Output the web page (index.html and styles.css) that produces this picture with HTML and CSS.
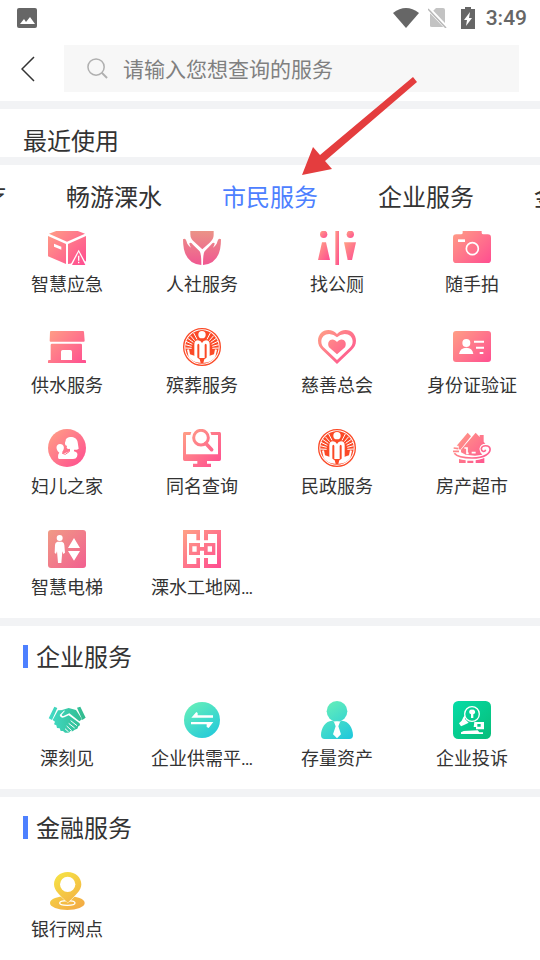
FILE: index.html
```html
<!DOCTYPE html>
<html lang="zh-CN">
<head>
<meta charset="utf-8">
<meta name="viewport" content="width=device-width, initial-scale=1">
<title>市民服务</title>
<link rel="stylesheet" href="styles.css">
</head>
<body>
<svg class="defs" aria-hidden="true">
  <defs>
    <linearGradient id="pink" x1="0" y1="0" x2="1" y2="1"><stop offset="0" stop-color="#ffa285"/><stop offset="1" stop-color="#ff4b91"/></linearGradient>
    <linearGradient id="pinkAll" gradientUnits="userSpaceOnUse" x1="0" y1="0" x2="114" y2="114"><stop offset="0" stop-color="#ffa285"/><stop offset="1" stop-color="#ff4b91"/></linearGradient>
    <linearGradient id="pinkSoft" gradientUnits="userSpaceOnUse" x1="0" y1="0" x2="114" y2="114"><stop offset="0" stop-color="#f09b85"/><stop offset="1" stop-color="#f25f90"/></linearGradient>
    <linearGradient id="pinkDown" gradientUnits="userSpaceOnUse" x1="0" y1="0" x2="0" y2="114"><stop offset="0" stop-color="#ea9a86"/><stop offset="1" stop-color="#f05791"/></linearGradient>
    <linearGradient id="teal" x1="0" y1="0" x2="1" y2="1"><stop offset="0" stop-color="#68ecbb"/><stop offset="1" stop-color="#20cbe0"/></linearGradient>
    <linearGradient id="tealAll" gradientUnits="userSpaceOnUse" x1="20" y1="0" x2="95" y2="114"><stop offset="0" stop-color="#68f0b8"/><stop offset="1" stop-color="#20c8dc"/></linearGradient>
    <linearGradient id="shake" gradientUnits="userSpaceOnUse" x1="0" y1="50" x2="114" y2="50"><stop offset="0" stop-color="#42dcc8"/><stop offset="1" stop-color="#31b98b"/></linearGradient>
    <linearGradient id="green" x1="0" y1="0" x2="1" y2="1"><stop offset="0" stop-color="#05dca6"/><stop offset="1" stop-color="#08bd79"/></linearGradient>
    <linearGradient id="gold" gradientUnits="userSpaceOnUse" x1="20" y1="0" x2="100" y2="114"><stop offset="0" stop-color="#f6e545"/><stop offset="1" stop-color="#f3a844"/></linearGradient>
    <symbol id="emblem" viewBox="0 0 114 114">
      <circle cx="57" cy="57" r="55" fill="#fff" stroke="#fb4a27" stroke-width="4"/>
      <circle cx="57" cy="57" r="50" fill="#fb4a27"/>
      <path d="M42 34 32 15M35 38 22 23M31 43 14 31M28 49 9 40M26 55 7 50M26 61 7 60M72 34 82 15M79 38 92 23M83 43 100 31M86 49 105 40M88 55 107 50M88 61 107 60" stroke="#fff" stroke-width="3"/>
      <circle cx="57" cy="21" r="14" fill="#fb4a27"/>
      <circle cx="57" cy="20" r="11" fill="#fff"/>
      <path d="M34 90V49Q34 37 45 37Q53 37 57 45Q61 37 69 37Q80 37 80 49V90H71V52Q71 47 68 47Q65 47 65 52V90H49V52Q49 47 46 47Q43 47 43 52V90Z" fill="#fff"/>
      <path d="M12 65 18 64 21 79 34 83 50 94 53 104Q30 105 17 87ZM102 65 96 64 93 79 80 83 64 94 61 104Q84 105 97 87Z" fill="#fff"/>
    </symbol>
  </defs>
</svg>

<div class="status">
  <svg class="status-photo" viewBox="0 0 20 20" aria-hidden="true"><rect width="20" height="20" rx="2" fill="#666"/><path d="M3 16 7 11 9 14 13 9 18 16Z" fill="#fff"/></svg>
  <svg class="status-wifi" viewBox="0 0 26 20" aria-hidden="true"><path d="M0 5Q13-5 26 5L13 20Z" fill="#666"/></svg>
  <svg class="status-sim" viewBox="0 0 20 20" aria-hidden="true"><path d="M8 0H15Q17 0 17 2V18Q17 19 15 19H4Q2 19 2 18V6Z" fill="#c3c3c3"/><path d="M0 0 19 20" stroke="#fff" stroke-width="4"/><path d="M0 1 18 20" stroke="#b7b7b7" stroke-width="1.5"/></svg>
  <svg class="status-battery" viewBox="0 0 14 22" aria-hidden="true"><path d="M4 0H10V2H14V22H0V2H4Z" fill="#666"/><path d="M9 5 3 13H6L5 19 11 11H8Z" fill="#fff"/></svg>
  <time class="status-time">3:49</time>
</div>

<header class="header">
  <button class="back" type="button" aria-label="返回"><svg viewBox="0 0 14 26" aria-hidden="true"><path d="M13 1 1 13 13 25" fill="none" stroke="#333" stroke-width="1.5"/></svg></button>
  <label class="search">
    <svg viewBox="0 0 22 22" aria-hidden="true"><circle cx="9.500" cy="9.500" r="8.500" fill="none" stroke="#b0b0b0" stroke-width="1.6"/><path d="M15.500 15.500 21 21" stroke="#b0b0b0" stroke-width="2"/></svg>
    <input type="search" placeholder="请输入您想查询的服务" aria-label="搜索服务">
  </label>
</header>

<section class="recent"><h2>最近使用</h2></section>

<nav class="tabs">
  <a href="#health">健康医疗</a>
  <a href="#travel">畅游溧水</a>
  <a href="#citizen" class="active" aria-current="true">市民服务</a>
  <a href="#company">企业服务</a>
  <a href="#finance">金融服务</a>
</nav>

<main>
  <section class="group scrolled" id="citizen">
    <div class="grid">
      <a class="item" href="#"><svg viewBox="0 0 114 114" aria-hidden="true"><g fill="url(#pinkAll)"><path d="M57 0 111 20 57 44 3 20Z"/><path d="M0 27 54 51V111L0 88Z"/><path d="M60 51 114 27V103L60 111Z"/></g><path d="M18 50 40 59V68L18 59Z" fill="#fff"/><path d="M92 68 66 116H118Z" fill="#fff"/><path d="M92 75 72 114H112Z" fill="url(#pinkAll)"/><path d="M92 86V101M92 104V109" stroke="#fff" stroke-width="4"/></svg><span>智慧应急</span></a>
      <a class="item" href="#"><svg viewBox="0 0 114 114" aria-hidden="true"><g fill="url(#pinkDown)"><path d="M22 0H92V24Q92 36 80 47L58 67 35 46Q22 36 22 22Z"/><path d="M0 37Q7 32 10 41L13 50Q18 58 24 62 17 51 20 48 25 46 30 53L50 73Q55 79 55 114 0 110 0 37Z"/><path d="M114 37Q107 32 104 41L101 50Q96 58 90 62 97 51 94 48 89 46 84 53L65 73Q60 79 60 114 114 110 114 37Z"/></g></svg><span>人社服务</span></a>
      <a class="item" href="#"><svg viewBox="0 0 114 114" aria-hidden="true"><g fill="url(#pink)"><circle cx="17" cy="22" r="11"/><circle cx="97" cy="22" r="11"/><path d="M12 46H24L36 99H0Z"/><path d="M52 0H63V114H52Z"/><path d="M78 46H114L102 99H89Z"/></g></svg><span>找公厕</span></a>
      <a class="item" href="#"><svg viewBox="0 0 114 114" aria-hidden="true"><path d="M10 22H24Q29 22 29 17V12H86V17Q86 22 91 22H104Q114 22 114 32V98Q114 108 104 108H10Q0 108 0 98V32Q0 22 10 22Z" fill="url(#pinkAll)"/><circle cx="58" cy="65" r="18" fill="none" stroke="#fff" stroke-width="5"/><path d="M15 37H36V45H15Z" fill="#fff"/></svg><span>随手拍</span></a>

      <a class="item" href="#"><svg viewBox="0 0 114 114" aria-hidden="true"><path d="M9 9H105Q108 9 108 12L110 38Q110 41 107 41H8Q5 41 5 38L6 12Q6 9 9 9ZM12 47H98Q102 47 102 51V96H111Q114 96 114 99V105H0V99Q0 96 3 96H8V51Q8 47 12 47ZM44 66Q39 66 39 71V96H72V71Q72 66 67 66Z" fill="url(#pinkAll)" fill-rule="evenodd"/></svg><span>供水服务</span></a>
      <a class="item" href="#"><svg viewBox="0 0 114 114" aria-hidden="true"><use href="#emblem"/></svg><span>殡葬服务</span></a>
      <a class="item" href="#"><svg viewBox="0 0 114 114" aria-hidden="true"><path d="M57 18Q46 6 31 6C13 6 0 20 0 38C0 50 5 58 13 66L57 108 101 66C109 58 114 50 114 38C114 20 101 6 83 6Q68 6 57 18ZM57 28Q66 19 80 18C94 18 104 27 104 41C104 50 99 56 94 61L57 96 20 61C14 56 10 50 10 41C10 27 20 18 34 18Q48 19 57 28ZM57 42C46 26 23 36 33 58L57 79 81 58C91 36 68 26 57 42Z" fill="url(#pinkAll)" fill-rule="evenodd"/></svg><span>慈善总会</span></a>
      <a class="item" href="#"><svg viewBox="0 0 114 114" aria-hidden="true"><rect y="9" width="114" height="93" rx="9" fill="url(#pinkAll)"/><g fill="#fff"><circle cx="40" cy="45" r="12"/><path d="M18 78Q22 59 40 59T61 78ZM63 38H93V44H63ZM69 56H93V62H69ZM80 72H91V78H80Z"/></g></svg><span>身份证验证</span></a>

      <a class="item" href="#"><svg viewBox="0 0 114 114" aria-hidden="true"><circle cx="57" cy="57" r="57" fill="url(#pinkAll)"/><g fill="#fff"><path d="M53 35C53 20 87 19 89 40L92 59Q85 64 78 62V67Q92 70 87 83 84 90 75 90H34Q28 90 31 76L34 71C22 62 23 45 36 45 49 45 51 60 43 68V74Q53 72 66 66V59Q59 62 56 56L57 50Q52 51 51 45 50 41 53 35Z"/></g><path d="M43 73 52 76 65 67" fill="none" stroke="#ff7088" stroke-width="3"/></svg><span>妇儿之家</span></a>
      <a class="item" href="#"><svg viewBox="0 0 114 114" aria-hidden="true"><path d="M4 9H25L22 18H9V76H105V18H85L82 9H110Q114 9 114 14V91Q114 96 109 96H72V104H84V114H30V104H43V96H5Q0 96 0 91V14Q0 9 4 9Z" fill="url(#pinkAll)"/><g fill="none" stroke="url(#pinkAll)"><circle cx="54" cy="26" r="22" stroke-width="9"/><path d="M68 43 86 62" stroke-width="11" stroke-linecap="round"/></g></svg><span>同名查询</span></a>
      <a class="item" href="#"><svg viewBox="0 0 114 114" aria-hidden="true"><use href="#emblem"/></svg><span>民政服务</span></a>
      <a class="item" href="#"><svg viewBox="0 0 114 114" aria-hidden="true"><g fill="url(#pinkAll)"><path d="M44 11 54 22 22 62 17 60V50H11Z"/><path d="M68 11 80 24V18H92V38L103 52H96L84 56 82 70 88 77 66 80 38 77 24 70V62Z"/><path d="M18 90Q27 93 38 94V102H18ZM43 95H61V102H43ZM68 94Q84 91 94 86V102H68Z"/></g><path d="M34 57H42V73H47M56 71H68" fill="none" stroke="#fff" stroke-width="5"/><path d="M2 57 16 59M0 67 18 67M4 73Q15 88 57 88C96 88 113 72 112 59 111 45 86 46 84 59 84 68 95 71 98 62" fill="none" stroke="#fff" stroke-width="9"/><path d="M2 57 16 59M0 67 18 67M4 73Q15 87 57 87C96 87 113 72 111 59 109 47 87 48 85 59 85 68 95 71 98 62" fill="none" stroke="url(#pinkAll)" stroke-width="5"/></svg><span>房产超市</span></a>

      <a class="item" href="#"><svg viewBox="0 0 114 114" aria-hidden="true"><rect width="114" height="114" rx="9" fill="url(#pinkSoft)"/><g fill="#fff"><circle cx="35" cy="24" r="9"/><path d="M28 35H42Q49 37 49 45L51 68 46 72 43 64 40 99H30L27 64 24 72 20 68 21 45Q21 37 28 35ZM78 24 96 54H60ZM60 63H96L78 92Z"/></g></svg><span>智慧电梯</span></a>
      <a class="item" href="#"><svg viewBox="0 0 114 114" aria-hidden="true"><path d="M0 0H51V31H40V12H12V102H40V84H51V114H0ZM63 0H114V114H63V84H75V102H102V12H75V31H63ZM18 39H51V51H63V39H97V75H63V62H51V75H18ZM28 49V65H41V49ZM74 49V65H87V49Z" fill="url(#pinkAll)" fill-rule="evenodd"/></svg><span>溧水工地网…</span></a>
    </div>
  </section>

  <section class="group" id="company">
    <h2>企业服务</h2>
    <div class="grid">
      <a class="item" href="#"><svg viewBox="0 0 114 114" aria-hidden="true"><g fill="url(#shake)"><path d="M19 17 28 21 12 57 2 52ZM87 20 97 17 113 50 103 57Z"/><path d="M30 28 50 27 35 42Q38 54 49 49L62 43 94 66Q99 73 91 76L88 83 80 86 74 91 67 90 63 95 51 95 45 90 38 90 35 82 27 81 25 73 18 70 21 62 14 57Z"/><path d="M42 27 62 21 84 27 102 55 94 61 64 37 48 44Q42 47 41 41L51 29Z"/></g><path d="M62 67 80 81M56 75 71 89M51 83 62 93M68 59 87 74" stroke="#fff" stroke-width="3"/></svg><span>溧刻见</span></a>
      <a class="item" href="#"><svg viewBox="0 0 114 114" aria-hidden="true"><circle cx="57" cy="57" r="54" fill="url(#tealAll)"/><path d="M25 50 40 33 44 36V43H90V50ZM24 63H91L77 81 71 78V70H24Z" fill="#fff"/></svg><span>企业供需平…</span></a>
      <a class="item" href="#"><svg viewBox="0 0 114 114" aria-hidden="true"><g fill="url(#tealAll)"><circle cx="57" cy="31" r="31"/><path d="M9 103C9 80 23 60 42 59Q57 66 72 59C91 60 105 80 105 103Q105 114 94 114H20Q9 114 9 103Z"/></g><path d="M48 63Q57 59 66 63L61 76 69 100 57 112 45 100 53 76Z" fill="#fff"/></svg><span>存量资产</span></a>
      <a class="item" href="#"><svg viewBox="0 0 114 114" aria-hidden="true"><rect width="114" height="114" rx="16" fill="url(#green)"/><circle cx="57" cy="39" r="22" fill="none" stroke="#fff" stroke-width="4"/><path d="M57 26A7 7 0 0 1 61 40V51H54V40A7 7 0 0 1 57 26ZM36 42 31 49 26 59 18 67 24 76 33 72 47 65 36 54ZM64 63H93V85H69V78H62ZM73 69V77H83V69ZM32 90 74 88 79 94H90V99H24V94Z" fill="#fff" fill-rule="evenodd"/></svg><span>企业投诉</span></a>
    </div>
  </section>

  <section class="group" id="finance">
    <h2>金融服务</h2>
    <div class="grid">
      <a class="item" href="#"><svg viewBox="0 0 114 114" aria-hidden="true"><ellipse cx="58" cy="93" rx="52" ry="21" fill="url(#gold)"/><ellipse cx="58" cy="93" rx="23" ry="7" fill="none" stroke="#fff" stroke-width="4"/><path d="M59 0C82 0 100 16 100 37C100 56 82 70 59 92C36 70 18 56 18 37C18 16 36 0 59 0Z" fill="url(#gold)" stroke="#fff" stroke-width="3" paint-order="stroke"/><circle cx="59" cy="37" r="23" fill="#fff"/></svg><span>银行网点</span></a>
    </div>
  </section>
</main>

<svg class="pointer" viewBox="0 0 116 100" aria-hidden="true"><path d="M111 1 115 6 23 85 30 93 0 99 11 71 18 79Z" fill="#e43d3e"/></svg>
</body>
</html>
```

FILE: styles.css
```css
* {
  box-sizing: border-box;
}

body {
  position: relative;
  margin: 0;
  min-height: 100vh;
  overflow-x: hidden;
  background: #fff;
  color: #333;
  font-family: Roboto, "Noto Sans CJK SC", sans-serif;
}

a {
  color: inherit;
  text-decoration: none;
}

svg {
  display: block;
  flex: none;
}

h2 {
  margin: 0;
  font-size: 24px;
  font-weight: 400;
  line-height: 30px;
}

.defs {
  position: absolute;
  width: 0;
  height: 0;
}

.status {
  display: flex;
  align-items: center;
  height: 36px;
  padding: 0 13px 0 17px;
}

.status-photo {
  width: 20px;
  height: 20px;
  margin-right: auto;
}

.status-wifi {
  width: 26px;
  height: 20px;
  margin-right: 9px;
}

.status-sim {
  width: 20px;
  height: 20px;
  margin-right: 13px;
}

.status-battery {
  width: 14px;
  height: 22px;
  margin-right: 11px;
}

.status-time {
  color: #666;
  font-size: 21px;
  font-weight: 500;
  line-height: 36px;
}

.header {
  display: flex;
  align-items: center;
  padding: 9px 21px 9px 0;
}

.back {
  width: 64px;
  padding: 10px 21px;
  border: 0;
  background: none;
}

.back svg {
  width: 14px;
  height: 26px;
}

.search {
  display: flex;
  flex: 1;
  align-items: center;
  gap: 15px;
  height: 47px;
  padding-left: 23px;
  background: #f7f7f7;
}

.search svg {
  width: 21px;
  height: 21px;
}

.search input {
  flex: 1;
  min-width: 0;
  height: 47px;
  padding: 2px 0 0;
  border: 0;
  outline: 0;
  background: none;
  color: #333;
  font-family: inherit;
  font-size: 21px;
}

.search input::placeholder {
  color: #808080;
  opacity: 1;
}

.recent {
  padding: 18px 23px 0;
  border: solid #f2f3f5;
  border-width: 8px 0;
}

.tabs {
  display: flex;
  justify-content: center;
  gap: 60px;
  overflow: hidden;
  padding: 16px 0;
  font-size: 24px;
  line-height: 34px;
  white-space: nowrap;
}

.tabs a {
  flex: none;
}

.tabs .active {
  color: #4d80ff;
}

.group {
  padding: 17px 0;
}

.group + .group {
  border-top: 8px solid #f2f3f5;
}

.group h2 {
  display: flex;
  gap: 8px;
  margin: 0 23px 28px;
}

.group h2::before {
  width: 5px;
  height: 23px;
  margin-top: 2px;
  background: #4d80ff;
  content: "";
}

.grid {
  display: grid;
  grid-template-columns: repeat(4, 1fr);
  row-gap: 30px;
}

.scrolled {
  overflow: hidden;
  padding-top: 0;
}

.scrolled .grid {
  margin-top: -4px;
}

.item {
  display: flex;
  flex-direction: column;
  align-items: center;
  gap: 7px;
  min-width: 0;
  padding-right: 1px;
  font-size: 18px;
  line-height: 26px;
  white-space: nowrap;
}

.item svg {
  width: 38px;
  height: 38px;
}

.pointer {
  position: absolute;
  top: 76px;
  left: 302px;
  width: 116px;
  height: 100px;
  pointer-events: none;
}
```
